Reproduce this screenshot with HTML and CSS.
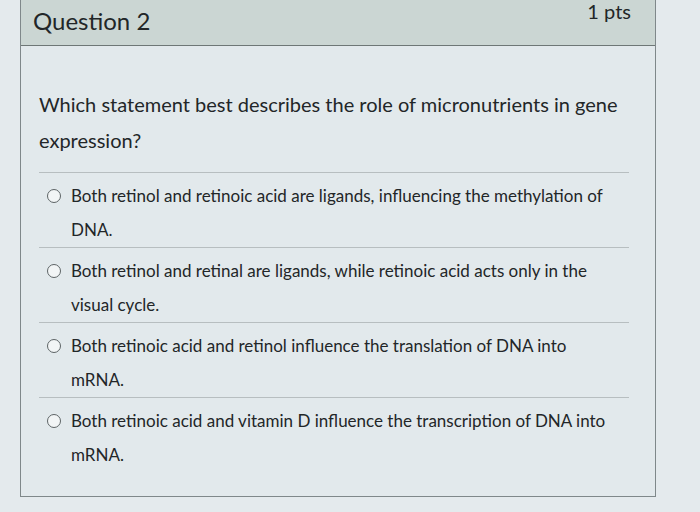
FILE: index.html
```html
<!DOCTYPE html>
<html lang="en">
<head>
    <meta charset="UTF-8">
    <meta name="viewport" content="width=device-width, initial-scale=1.0">
    <title>Question 2</title>
    <link rel="stylesheet" href="styles.css">
</head>
<body>
    <div class="card">
        <div class="card-header">
            <h2 class="title">Question 2</h2>
            <span class="points">1 pts</span>
        </div>
        <div class="card-body">
            <p class="question">Which statement best describes the role of micronutrients in gene expression?</p>
            <div class="answers">
                <label class="answer">
                    <span class="radio"></span>
                    <span class="answer-text">Both retinol and retinoic acid are ligands, influencing the methylation of DNA.</span>
                </label>
                <label class="answer">
                    <span class="radio"></span>
                    <span class="answer-text">Both retinol and retinal are ligands, while retinoic acid acts only in the visual cycle.</span>
                </label>
                <label class="answer">
                    <span class="radio"></span>
                    <span class="answer-text">Both retinoic acid and retinol influence the translation of DNA into mRNA.</span>
                </label>
                <label class="answer">
                    <span class="radio"></span>
                    <span class="answer-text">Both retinoic acid and vitamin D influence the transcription of DNA into mRNA.</span>
                </label>
            </div>
        </div>
    </div>
</body>
</html>
```

FILE: styles.css
```css
body {
    margin: 0;
    font-family: Lato, "Open Sans", sans-serif;
    color: #222628;
    background-color: #e4eaed;
}
.card {
    margin: 0 44px 0 20px;
    height: 496px;
    border: 1px solid #7f888a;
    border-top: none;
    background-color: #e2e9ec;
}
.card-header {
    display: flex;
    justify-content: space-between;
    height: 45px;
    padding: 0 24px 0 12px;
    background-color: #cbd6d3;
    border-bottom: 1px solid #6e7776;
}
.title {
    margin: 6px 0 0;
    font-size: 24px;
    font-weight: normal;
    line-height: 30px;
}
.points {
    margin-top: 1px;
    font-size: 20px;
    line-height: 20px;
}
.card-body {
    padding: 40px 26px 0 18px;
}
.question {
    margin: 0;
    font-size: 20px;
    line-height: 36px;
}
.answers {
    margin-top: 14px;
}
.answer {
    display: flex;
    align-items: flex-start;
    gap: 10px;
    padding: 6px 16px 0 8px;
    border-top: 1px solid #b7bec0;
    font-size: 17px;
    line-height: 34px;
}
.radio {
    flex: none;
    width: 12px;
    height: 12px;
    margin-top: 10px;
    border: 1.5px solid #5d6466;
    border-radius: 50%;
    background-color: #f2f5f6;
}
```
